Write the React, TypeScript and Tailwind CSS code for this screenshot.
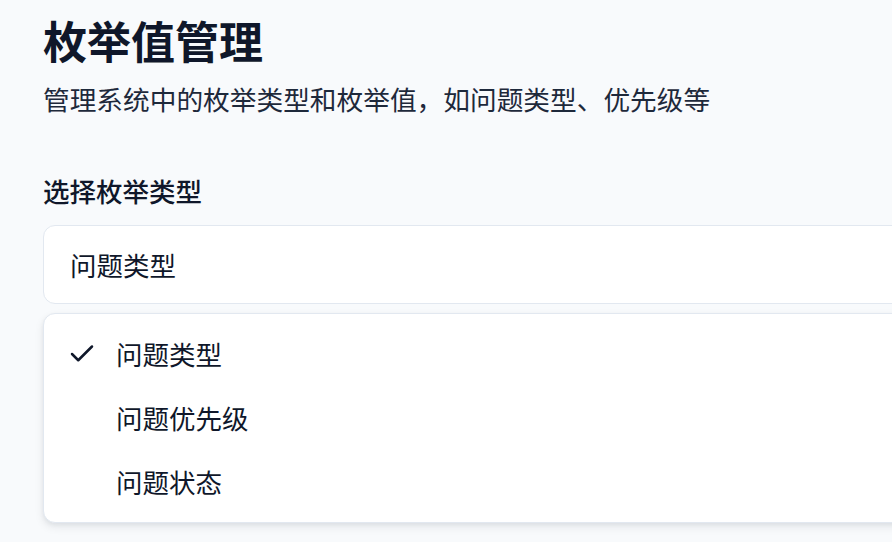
import React from "react";

const font = { fontFamily: '"Noto Sans CJK SC", "Noto Sans", sans-serif' };

export default function App() {
  const items = ["问题类型", "问题优先级", "问题状态"];
  return (
    <div className="h-[542px] w-[892px] overflow-hidden bg-[#f8fafc]" style={font}>
      <div className="w-[1000px] pl-[43px] pt-[13px]">
        <h1 className="text-[44px] leading-[54px] font-bold text-[#0f172a]">枚举值管理</h1>
        <p className="mt-[12px] text-[26.7px] leading-[40px] text-[#1e293b]">
          管理系统中的枚举类型和枚举值，如问题类型、优先级等
        </p>
        <div className="mt-[52px] text-[26.5px] leading-[40px] font-medium text-[#0f172a]">选择枚举类型</div>
        <div className="mt-[14px] flex h-[79px] items-center rounded-[12px] border border-[#e2e8f0] bg-white pl-[26px] text-[26.5px] text-[#0f172a]">
          问题类型
        </div>
        <div className="mt-[9px] rounded-[12px] border border-[#e2e8f0] bg-white py-[8px] shadow-[0_4px_10px_rgba(15,23,42,0.08),0_2px_4px_rgba(15,23,42,0.05)]">
          {items.map((t, i) => (
            <div key={t} className="flex h-[64px] items-center text-[26.5px] text-[#0f172a]">
              <div className="flex w-[72px] justify-end pr-[19px]">
                {i === 0 && (
                  <svg width="30" height="30" viewBox="0 0 24 24" fill="none" stroke="#0f172a" strokeWidth="2" strokeLinecap="round" strokeLinejoin="round">
                    <path d="M20 6 9 17l-5-5" />
                  </svg>
                )}
              </div>
              <span>{t}</span>
            </div>
          ))}
        </div>
      </div>
    </div>
  );
}
